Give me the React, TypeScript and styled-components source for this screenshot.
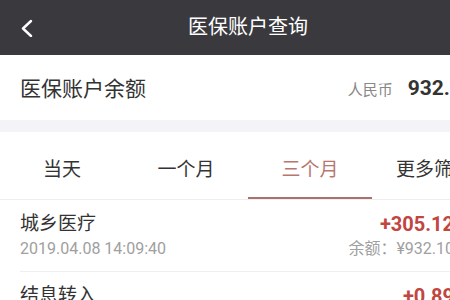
import React, { useState } from 'react';
import styled, { createGlobalStyle } from 'styled-components';

const GlobalStyle = createGlobalStyle`
  html, body {
    margin: 0;
    padding: 0;
    background: #ffffff;
    overflow: hidden;
  }
  body {
    font-family: Roboto, "Noto Sans CJK SC", "Noto Sans", sans-serif;
  }
`;

const Screen = styled.div`
  width: 496px;
  background: #ffffff;
`;

const NavBar = styled.div`
  height: 55px;
  background: #3a3a3e;
  display: flex;
  align-items: center;
  justify-content: center;
  position: relative;
`;

const BackButton = styled.button`
  position: absolute;
  left: 18px;
  top: 18px;
  width: 18px;
  height: 20px;
  padding: 0;
  border: none;
  background: none;
  display: flex;
  align-items: center;
  justify-content: center;
  cursor: pointer;
`;

const NavTitle = styled.h1`
  margin: 0;
  color: #ffffff;
  font-size: 20px;
  font-weight: 400;
  line-height: 1;
  padding-bottom: 1px;
`;

const BalanceRow = styled.div`
  height: 65px;
  display: flex;
  align-items: center;
  justify-content: space-between;
  padding: 0 20px;
  border-bottom: 12px solid #f4f4f8;
`;

const BalanceLabel = styled.span`
  font-size: 21px;
  color: #333333;
  padding-bottom: 2px;
`;

const BalanceValue = styled.div`
  display: flex;
  align-items: baseline;
  gap: 15px;
  padding-right: 2px;
`;

const Currency = styled.span`
  font-size: 15px;
  color: #888888;
`;

const Amount = styled.span`
  font-size: 21px;
  font-weight: 700;
  color: #333333;
`;

const TabBar = styled.div`
  height: 67px;
  display: flex;
  border-bottom: 1px solid #eeeeee;
`;

const Tab = styled.button<{ $active: boolean }>`
  flex: 1;
  border: none;
  background: none;
  padding: 4px 0 0;
  font-family: inherit;
  font-size: 19px;
  color: ${p => (p.$active ? '#b7776e' : '#333333')};
  position: relative;
  cursor: pointer;
  &::after {
    content: '';
    display: ${p => (p.$active ? 'block' : 'none')};
    position: absolute;
    left: 0;
    right: 0;
    bottom: 0;
    height: 2px;
    background: #a9736b;
  }
`;

const RecordList = styled.div`
  padding-left: 20px;
`;

const Record = styled.div`
  height: 72px;
  display: flex;
  align-items: center;
  justify-content: space-between;
  padding-right: 42px;
  border-bottom: 1px solid #efefef;
  box-sizing: border-box;
`;

const RecordInfo = styled.div`
  display: flex;
  flex-direction: column;
  gap: 3px;
`;

const RecordTitle = styled.span`
  font-size: 19px;
  color: #333333;
  line-height: 24px;
`;

const RecordTime = styled.span`
  font-size: 16px;
  color: #a0a0a0;
  line-height: 20px;
`;

const RecordSide = styled.div`
  display: flex;
  flex-direction: column;
  align-items: flex-end;
  gap: 3px;
`;

const RecordAmount = styled.span`
  font-size: 20px;
  font-weight: 700;
  color: #c0463f;
  line-height: 24px;
`;

const RecordBalance = styled.span`
  font-size: 16px;
  color: #a0a0a0;
  line-height: 20px;
`;

const tabs = ['当天', '一个月', '三个月', '更多筛选'];

const records = [
  { title: '城乡医疗', time: '2019.04.08 14:09:40', amount: '+305.12', balance: '余额：¥932.10' },
  { title: '结息转入', time: '2019.03.21 09:12:05', amount: '+0.89', balance: '余额：¥626.98' },
];

const App: React.FC = () => {
  const [active, setActive] = useState(2);

  return (
    <Screen>
      <GlobalStyle />
      <NavBar>
        <BackButton aria-label="返回">
          <svg width="14" height="18" viewBox="0 0 14 18" fill="none">
            <polyline points="11,2 3,9.5 11,17" stroke="#ffffff" strokeWidth="2.4" strokeLinecap="round" strokeLinejoin="round" />
          </svg>
        </BackButton>
        <NavTitle>医保账户查询</NavTitle>
      </NavBar>
      <BalanceRow>
        <BalanceLabel>医保账户余额</BalanceLabel>
        <BalanceValue>
          <Currency>人民币</Currency>
          <Amount>932.10</Amount>
        </BalanceValue>
      </BalanceRow>
      <TabBar>
        {tabs.map((t, i) => (
          <Tab key={t} $active={i === active} onClick={() => setActive(i)}>
            {t}
          </Tab>
        ))}
      </TabBar>
      <RecordList>
        {records.map(r => (
          <Record key={r.title}>
            <RecordInfo>
              <RecordTitle>{r.title}</RecordTitle>
              <RecordTime>{r.time}</RecordTime>
            </RecordInfo>
            <RecordSide>
              <RecordAmount>{r.amount}</RecordAmount>
              <RecordBalance>{r.balance}</RecordBalance>
            </RecordSide>
          </Record>
        ))}
      </RecordList>
    </Screen>
  );
};

export default App;
